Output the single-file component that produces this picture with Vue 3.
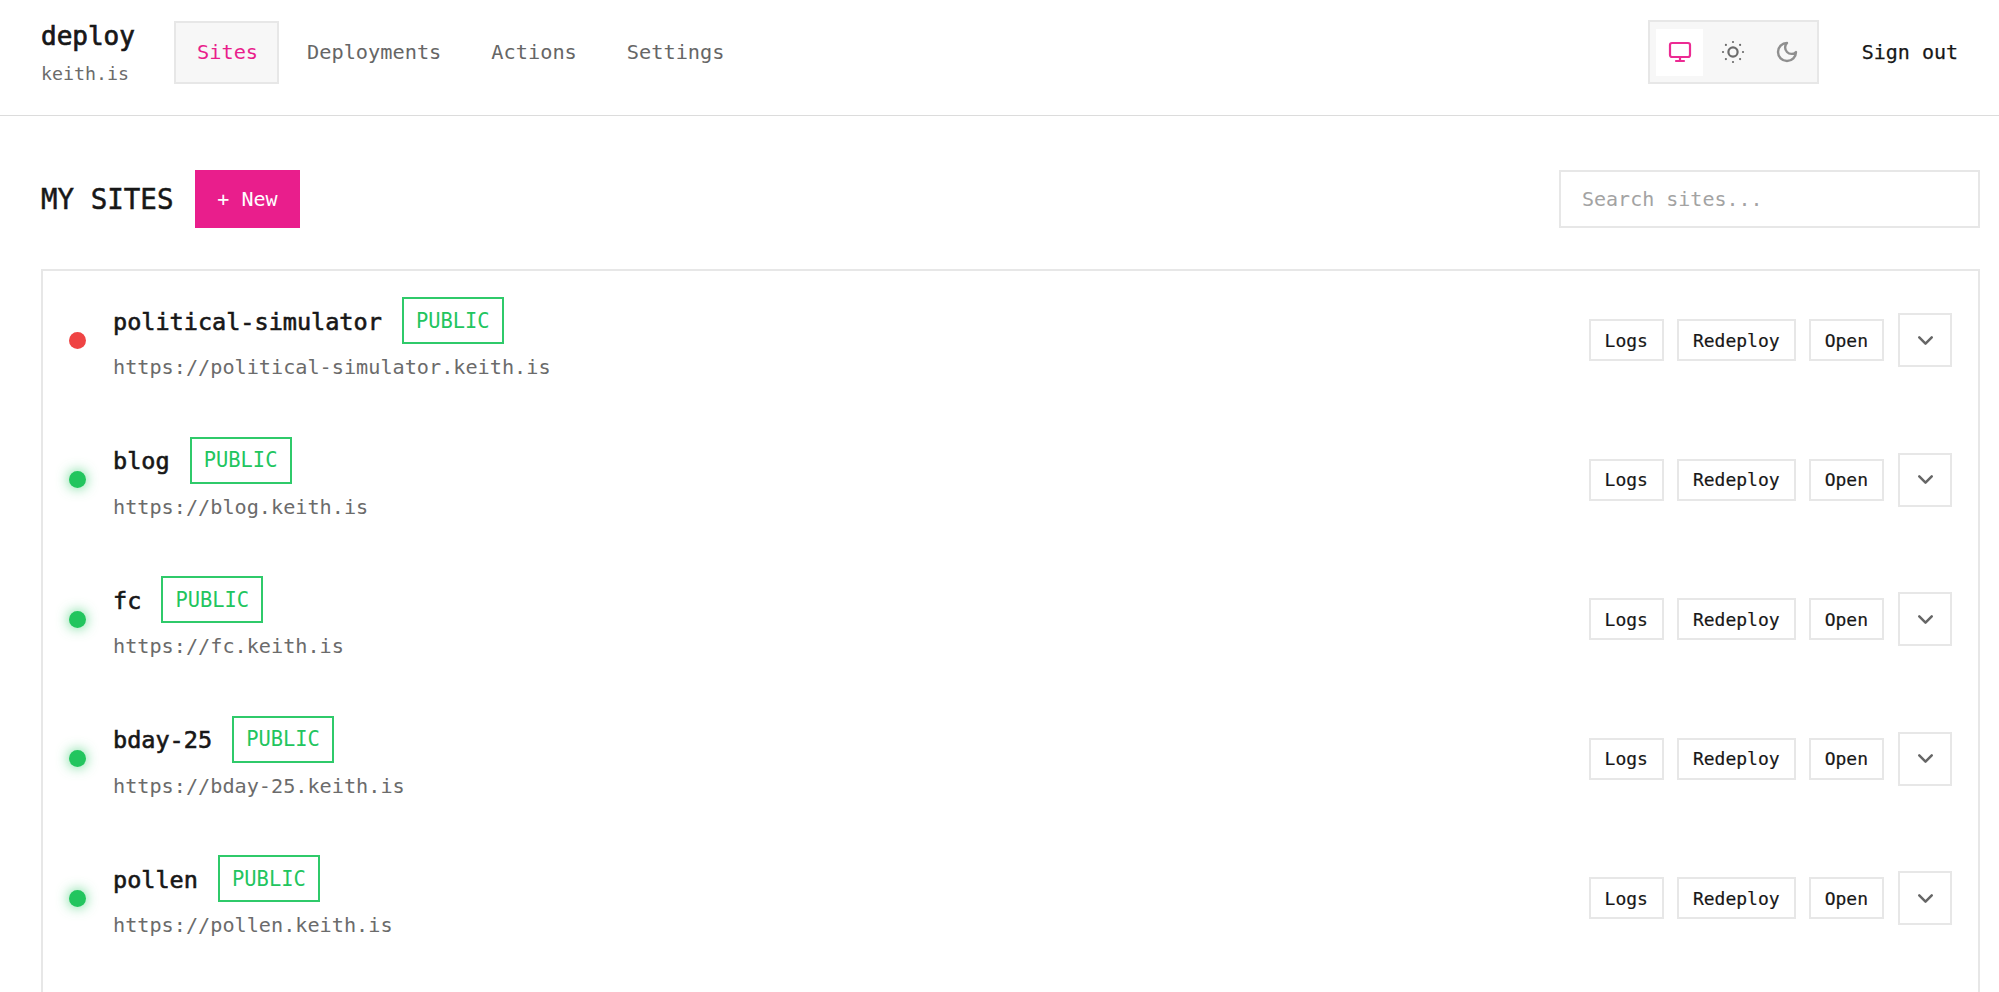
<script setup>
const sites = [
  { name: 'political-simulator', ok: false },
  { name: 'blog', ok: true },
  { name: 'fc', ok: true },
  { name: 'bday-25', ok: true },
  { name: 'pollen', ok: true },
]
const nav = ['Deployments', 'Actions', 'Settings']
</script>

<template>
  <div class="page">
    <header class="top">
      <div class="brand">
        <div class="brand-name">deploy</div>
        <div class="brand-sub">keith.is</div>
      </div>
      <nav class="nav">
        <a class="nav-item active">Sites</a>
        <a v-for="n in nav" :key="n" class="nav-item">{{ n }}</a>
      </nav>
      <div class="spacer"></div>
      <div class="theme">
        <span class="theme-btn on">
          <svg viewBox="0 0 24 24" width="24" height="24" fill="none" stroke="#ec2b93" stroke-width="2.2" stroke-linecap="round" stroke-linejoin="round"><rect x="2" y="3" width="20" height="14" rx="2"/><path d="M8 21h8M12 17v4"/></svg>
        </span>
        <span class="theme-btn">
          <svg viewBox="0 0 24 24" width="24" height="24" fill="none" stroke="#6b6b6b" stroke-width="2.2" stroke-linecap="round" stroke-linejoin="round"><circle cx="12" cy="12" r="4.6"/><path d="M12 2v.01M12 22v.01M4.9 4.9v.01M19.1 19.1v.01M2 12h.01M22 12h.01M4.9 19.1v.01M19.1 4.9v.01"/></svg>
        </span>
        <span class="theme-btn">
          <svg viewBox="0 0 24 24" width="24" height="24" fill="none" stroke="#8f8f8f" stroke-width="2.4" stroke-linecap="round" stroke-linejoin="round"><path d="M12 3a6 6 0 0 0 9 9 9 9 0 1 1-9-9Z"/></svg>
        </span>
      </div>
      <a class="signout">Sign out</a>
    </header>

    <main class="main">
      <div class="title-row">
        <h1 class="title">MY SITES</h1>
        <button class="new">+ New</button>
        <div class="spacer"></div>
        <input class="search" placeholder="Search sites..." />
      </div>

      <section class="card">
        <div v-for="s in sites" :key="s.name" class="row">
          <span class="dot" :class="s.ok ? 'green' : 'red'"></span>
          <div class="info">
            <div class="name-line">
              <span class="name">{{ s.name }}</span>
              <span class="badge">PUBLIC</span>
            </div>
            <div class="url">https://{{ s.name }}.keith.is</div>
          </div>
          <div class="spacer"></div>
          <div class="actions">
            <button class="btn">Logs</button>
            <button class="btn">Redeploy</button>
            <button class="btn">Open</button>
            <button class="chev">
              <svg viewBox="0 0 24 24" width="25" height="25" fill="none" stroke="#666" stroke-width="2.4" stroke-linecap="round" stroke-linejoin="round"><path d="m6 9 6 6 6-6"/></svg>
            </button>
          </div>
        </div>
      </section>
    </main>
  </div>
</template>

<style>
html, body { margin: 0; background: #fff; overflow: hidden; }
</style>

<style scoped>
.page {
  font-family: "DejaVu Sans Mono", "Liberation Mono", monospace;
  color: #171717;
  height: 992px;
  overflow: hidden;
}
.spacer { flex: 1; }
.top {
  display: flex;
  align-items: center;
  box-sizing: border-box;
  height: 116px;
  padding: 0 41px 11px;
  border-bottom: 1px solid #dcdcdc;
}
.brand { width: 133px; }
.brand-name {
  font-size: 26px;
  line-height: 36px;
  -webkit-text-stroke: 0.7px #171717;
}
.brand-sub { font-size: 18.3px; line-height: 26px; margin-top: 7px; color: #6b6b6b; }
.nav { display: flex; }
.nav-item {
  display: flex;
  align-items: center;
  height: 63px;
  box-sizing: border-box;
  padding: 0 25px;
  font-size: 20.3px;
  color: #666;
}
.nav-item.active {
  color: #e91e8c;
  background: #f7f7f7;
  border: 2px solid #e7e7e7;
  width: 105px;
  padding: 0 21px;
  margin-right: 3px;
}
.theme {
  display: flex;
  align-items: center;
  padding: 0 6.5px;
  height: 64px;
  box-sizing: border-box;
  background: #f7f7f7;
  border: 2px solid #e7e7e7;
}
.theme-btn {
  width: 47px;
  height: 47px;
  margin-right: 6.5px;
  display: flex;
  align-items: center;
  justify-content: center;
}
.theme-btn:last-child { margin-right: 0; }
.theme-btn.on { background: #fff; }
.signout {
  margin-left: 43px;
  font-size: 20px;
  color: #171717;
  -webkit-text-stroke: 0.25px #171717;
}
.main { padding: 54px 19px 0 41px; }
.title-row { display: flex; align-items: center; height: 58px; }
.title {
  margin: 0;
  font-size: 27.5px;
  font-weight: 400;
  -webkit-text-stroke: 0.5px #171717;
}
.new {
  margin-left: 21.5px;
  width: 105px;
  height: 58px;
  background: #e91e8c;
  color: #fff;
  border: 0;
  font: inherit;
  font-size: 20px;
}
.search {
  width: 421px;
  height: 58px;
  box-sizing: border-box;
  border: 2px solid #e7e7e7;
  padding: 0 21px;
  font: inherit;
  font-size: 20px;
  outline: none;
  background: #fff;
}
.search::placeholder { color: #a3a3a3; }
.card {
  margin-top: 40.5px;
  border: 2px solid #e7e7e7;
  padding-bottom: 200px;
}
.row {
  display: flex;
  align-items: center;
  height: 139.5px;
  padding: 0 26px;
}
.dot { width: 17px; height: 17px; border-radius: 50%; margin-right: 27px; flex: none; }
.dot.red { background: #ef4444; }
.dot.green { background: #22c55e; box-shadow: 0 0 13px rgba(34,197,94,.75); }
.name-line { display: flex; align-items: center; height: 47px; }
.name {
  padding-top: 2px;
  font-size: 23.5px;
  -webkit-text-stroke: 0.6px #171717;
}
.badge {
  margin-left: 20px;
  box-sizing: border-box;
  height: 47px;
  width: 102px;
  display: flex;
  align-items: center;
  justify-content: center;
  border: 2px solid #2fca6a;
  color: #22c55e;
  font-size: 20.4px;
}
.url { margin: 9px 0 2px; font-size: 20.2px; line-height: 28px; color: #6b6b6b; }
.actions { display: flex; align-items: center; gap: 13px; }
.btn {
  height: 42px;
  padding: 0 14px;
  background: #fff;
  border: 2px solid #e7e7e7;
  font: inherit;
  font-size: 18px;
  color: #171717;
  -webkit-text-stroke: 0.2px #171717;
}
.chev {
  width: 54px;
  height: 54px;
  margin-left: 1px;
  display: flex;
  align-items: center;
  justify-content: center;
  padding: 0;
  background: #fff;
  border: 2px solid #e7e7e7;
}
</style>
